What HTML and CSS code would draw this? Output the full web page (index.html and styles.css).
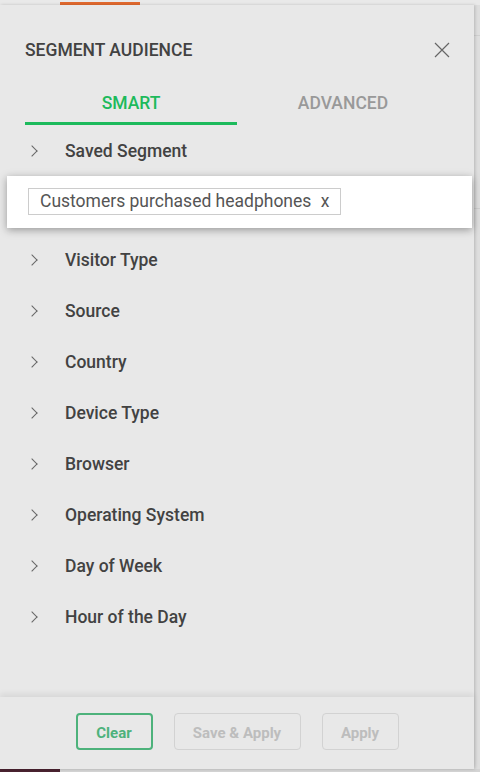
FILE: index.html
```html
<html>

<head>
    <link rel="stylesheet" href="styles.css">
</head>

<body>
    <div id="topbar">
        <div class="tab-mark"></div>
    </div>
    <div id="main">
        <div id="panel">
            <div class="head">
                <h2 class="title">SEGMENT AUDIENCE</h2>
                <button class="close" type="button">
                    <svg width="16" height="16" viewBox="0 0 16 16"><path d="M1 1L15 15M15 1L1 15" stroke="#666" stroke-width="1.2" fill="none"/></svg>
                </button>
            </div>
            <div class="tabs">
                <div class="tab active">SMART</div>
                <div class="tab">ADVANCED</div>
            </div>
            <ul class="list">
                <li class="item"><span class="chev"></span>Saved Segment</li>
            </ul>
            <div class="picked">
                <span class="chip">Customers purchased headphones <b>x</b></span>
            </div>
            <ul class="list">
                <li class="item"><span class="chev"></span>Visitor Type</li>
                <li class="item"><span class="chev"></span>Source</li>
                <li class="item"><span class="chev"></span>Country</li>
                <li class="item"><span class="chev"></span>Device Type</li>
                <li class="item"><span class="chev"></span>Browser</li>
                <li class="item"><span class="chev"></span>Operating System</li>
                <li class="item"><span class="chev"></span>Day of Week</li>
                <li class="item"><span class="chev"></span>Hour of the Day</li>
            </ul>
            <div class="foot">
                <button class="btn btn-clear" type="button">Clear</button>
                <button class="btn btn-off btn-save" type="button">Save &amp; Apply</button>
                <button class="btn btn-off btn-apply" type="button">Apply</button>
            </div>
        </div>
        <div id="side">
            <div class="side-a"></div>
            <div class="side-b"></div>
        </div>
    </div>
    <div id="bottom">
        <div class="bottom-mark"></div>
    </div>
</body>

</html>
```

FILE: styles.css
```css
body {
    margin: 0;
    background: #e6e6e6;
    font-family: Roboto, "Liberation Sans", Arial, sans-serif;
    overflow: hidden;
}

#topbar {
    height: 5px;
    background: #e9e9e9;
}

#topbar .tab-mark {
    margin-left: 60px;
    width: 80px;
    height: 3px;
    position: relative;
    top: 2px;
    background: #e2692f;
}

#main {
    display: flex;
    height: 764px;
}

#panel {
    width: 474px;
    background: #e8e8e8;
    box-shadow: 1px 0 3px rgba(0, 0, 0, 0.18);
    display: flex;
    flex-direction: column;
    position: relative;
    z-index: 1;
}

.head {
    display: flex;
    justify-content: space-between;
    align-items: center;
    padding: 34px 24px 0 25px;
}

.title {
    margin: 0;
    font-size: 17.5px;
    line-height: 22px;
    font-weight: 500;
    color: #424242;
}

.close {
    background: none;
    border: none;
    padding: 0;
    width: 16px;
    height: 16px;
    cursor: pointer;
}

.tabs {
    display: flex;
    margin: 26px 25px 0 25px;
}

.tab {
    flex: 1;
    text-align: center;
    font-size: 17.5px;
    font-weight: 500;
    line-height: 20px;
    padding: 6px 0 9px;
    color: #999;
    border-bottom: 3px solid transparent;
}

.tab.active {
    color: #1dba5c;
    border-bottom-color: #1dba5c;
}

.list {
    list-style: none;
    margin: 0;
    padding: 0;
}

.item {
    height: 51px;
    display: flex;
    align-items: center;
    padding-left: 28px;
    font-size: 17.5px;
    font-weight: 500;
    color: #424242;
}

.chev {
    width: 7px;
    height: 7px;
    border-right: 1.2px solid #666;
    border-top: 1.2px solid #666;
    transform: rotate(45deg);
    margin-right: 29px;
}

.picked {
    background: #fff;
    margin: 0 2px 6px 7px;
    padding: 12px 21px 13px;
    box-shadow: 0 2px 8px rgba(0, 0, 0, 0.35);
}

.chip {
    display: inline-block;
    border: 1px solid #ccc;
    padding: 0 11px 0 11px;
    height: 25px;
    line-height: 25px;
    font-size: 17.5px;
    color: #555;
}

.chip b {
    font-weight: 400;
    margin-left: 5px;
}

.foot {
    margin-top: auto;
    height: 72px;
    box-sizing: border-box;
    padding-top: 16px;
    display: flex;
    justify-content: center;
    gap: 21px;
    box-shadow: 0 -3px 6px rgba(0, 0, 0, 0.08);
}

.btn {
    height: 37px;
    border-radius: 4px;
    font-family: Roboto, "Liberation Sans", Arial, sans-serif;
    font-size: 15px;
    font-weight: 700;
    background: transparent;
    padding: 2px 0 0;
    cursor: pointer;
}

.btn-clear {
    width: 77px;
    border: 2px solid #4db27b;
    color: #4db27b;
}

.btn-off {
    border: 1px solid #d2d2d2;
    color: #bdbdbd;
}

.btn-save {
    width: 127px;
}

.btn-apply {
    width: 77px;
}

#side {
    flex: 1;
    background: #dedede;
}

.side-a {
    height: 30px;
    border-bottom: 1px solid #cfcfcf;
}

.side-b {
    height: 172px;
    border-bottom: 1px solid #cfcfcf;
}

#bottom {
    height: 3px;
    background: #d4d4d4;
}

.bottom-mark {
    width: 60px;
    height: 3px;
    background: #4a2331;
}
```
